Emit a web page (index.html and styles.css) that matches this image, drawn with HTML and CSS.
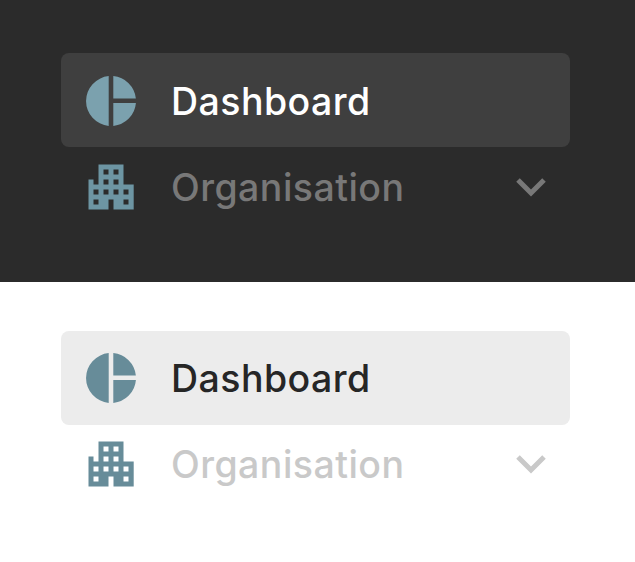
FILE: index.html
```html
<!DOCTYPE html>
<html lang="en">

<head>
    <meta charset="UTF-8">
    <title>Sidebar menu</title>
    <link rel="stylesheet" href="styles.css">
</head>

<body>
    <section class="panel dark">
        <nav class="menu">
            <a class="item active" href="#">
                <svg class="icon" viewBox="0 0 50 50"><path d="M22.7 0.11V49.89A25 25 0 0 1 22.7 0.11ZM27.3 0.11A25 25 0 0 1 49.86 22.4H27.3ZM27.3 27H49.92A25 25 0 0 1 27.3 49.89Z"/></svg>
                <span class="label">Dashboard</span>
            </a>
            <a class="item" href="#">
                <svg class="icon" viewBox="0 0 50 50"><path fill-rule="evenodd" d="M12.5 2.5H37.5V22.5H47.7V47.5H27.5V37.5H22.5V47.5H2.5V17.5H12.5ZM17.5 7.5V12.5H22.5V7.5ZM27.5 7.5V12.5H32.5V7.5ZM7.5 17.5V22.5H12.5V17.5ZM17.5 17.5V22.5H22.5V17.5ZM27.5 17.5V22.5H32.5V17.5ZM7.5 27.5V32.5H12.5V27.5ZM17.5 27.5V32.5H22.5V27.5ZM27.5 27.5V32.5H32.5V27.5ZM37.5 27.5V32.5H42.5V27.5ZM7.5 37.5V42.5H12.5V37.5ZM37.5 37.5V42.5H42.5V37.5Z"/></svg>
                <span class="label">Organisation</span>
                <svg class="chevron" viewBox="0 0 30 20"><path d="M2 3L15 16L28 3"/></svg>
            </a>
        </nav>
    </section>

    <section class="panel light">
        <nav class="menu">
            <a class="item active" href="#">
                <svg class="icon" viewBox="0 0 50 50"><path d="M22.7 0.11V49.89A25 25 0 0 1 22.7 0.11ZM27.3 0.11A25 25 0 0 1 49.86 22.4H27.3ZM27.3 27H49.92A25 25 0 0 1 27.3 49.89Z"/></svg>
                <span class="label">Dashboard</span>
            </a>
            <a class="item" href="#">
                <svg class="icon" viewBox="0 0 50 50"><path fill-rule="evenodd" d="M12.5 2.5H37.5V22.5H47.7V47.5H27.5V37.5H22.5V47.5H2.5V17.5H12.5ZM17.5 7.5V12.5H22.5V7.5ZM27.5 7.5V12.5H32.5V7.5ZM7.5 17.5V22.5H12.5V17.5ZM17.5 17.5V22.5H22.5V17.5ZM27.5 17.5V22.5H32.5V17.5ZM7.5 27.5V32.5H12.5V27.5ZM17.5 27.5V32.5H22.5V27.5ZM27.5 27.5V32.5H32.5V27.5ZM37.5 27.5V32.5H42.5V27.5ZM7.5 37.5V42.5H12.5V37.5ZM37.5 37.5V42.5H42.5V37.5Z"/></svg>
                <span class="label">Organisation</span>
                <svg class="chevron" viewBox="0 0 30 20"><path d="M2 3L15 16L28 3"/></svg>
            </a>
        </nav>
    </section>
</body>

</html>
```

FILE: styles.css
```css
body {
    margin: 0;
    font-family: 'Inter', sans-serif;
}

.panel {
    box-sizing: border-box;
    height: 282px;
    padding: 53px 65px 0 61px;
}

.dark {
    background-color: #2b2b2b;
    color: #787878;
}

.light {
    height: 280px;
    padding-top: 49px;
    background-color: #ffffff;
    color: #c9c9c9;
}

.menu {
    display: flex;
    flex-direction: column;
}

.item {
    box-sizing: border-box;
    display: flex;
    align-items: center;
    height: 80px;
    padding: 0 24px 0 25px;
    border-radius: 8px;
    color: inherit;
    text-decoration: none;
}

.light .item {
    height: 78px;
}

.item.active,
.light .item.active {
    height: 94px;
}

.dark .active {
    padding-top: 2px;
    background-color: #3f3f3f;
    color: #ffffff;
}

.light .active {
    background-color: #ececec;
    color: #262626;
}

/* pie is lighter on the dark panel */
.icon {
    width: 50px;
    height: 50px;
    flex-shrink: 0;
    fill: #678c99;
}

.dark .icon {
    fill: #6d95a3;
}

.dark .active .icon {
    fill: #7ba1ae;
}

.label {
    margin-left: 35px;
    padding-top: 2px;
    font-size: 37.5px;
    font-weight: 500;
    letter-spacing: 0.45px;
    line-height: 1;
}

.chevron {
    width: 30px;
    height: 20px;
    margin-left: auto;
    fill: none;
    stroke: currentColor;
    stroke-width: 5;
}
```
